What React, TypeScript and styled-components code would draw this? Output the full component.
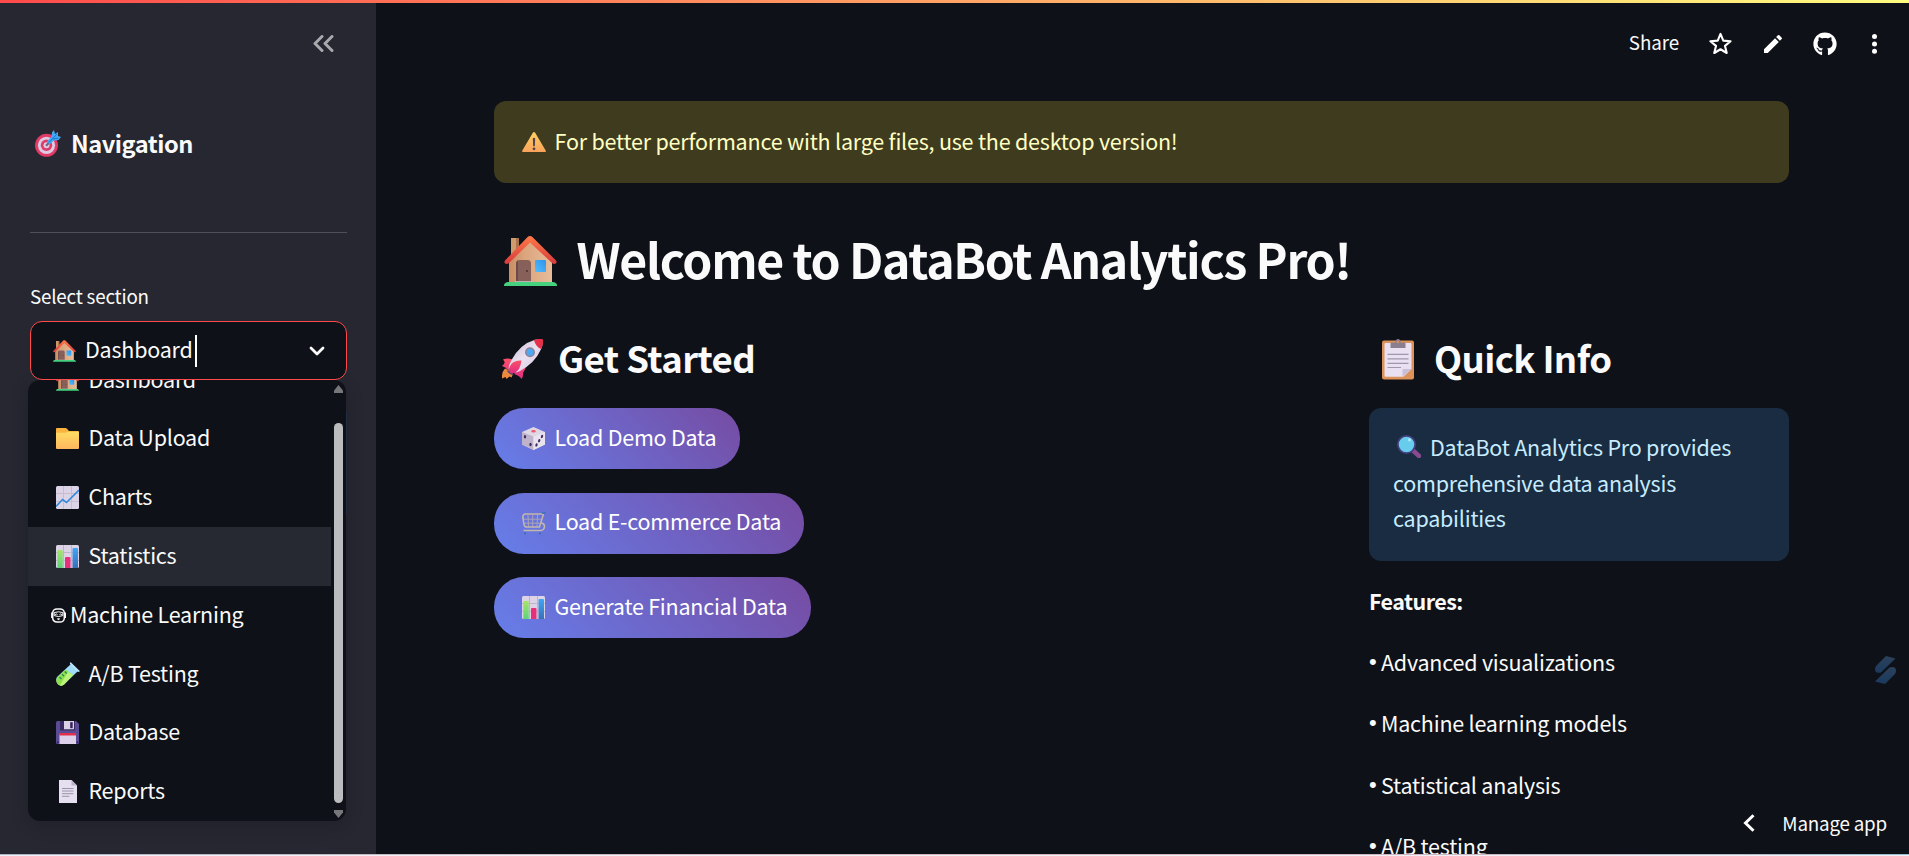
import React from 'react';
import styled, { createGlobalStyle } from 'styled-components';
import { FaGithub } from 'react-icons/fa';
import { MdEdit } from 'react-icons/md';

const GlobalStyle = createGlobalStyle`
  * { box-sizing: border-box; }
  body {
    margin: 0;
    overflow: hidden;
    background: #0e1117;
    color: #fafafa;
    font-family: "Noto Sans CJK SC", "Source Sans Pro", sans-serif;
    font-size: 21.5px;
    letter-spacing: -0.22px;
  }
  svg { display: block; flex: none; }
`;

/* ---------- emoji drawings ---------- */

type EmojiName =
  | 'house' | 'folder' | 'trend' | 'bars' | 'tube' | 'floppy' | 'page' | 'robot'
  | 'target' | 'warning' | 'rocket' | 'clipboard' | 'die' | 'cart' | 'lens';

const art: Record<EmojiName, { box: string; w: number; h: number; draw: React.ReactNode }> = {
  house: {
    box: '0 0 53 50', w: 23, h: 22,
    draw: (
      <>
        <defs>
          <linearGradient id="wall" x1="0" x2="1"><stop offset="0" stopColor="#c98d62" /><stop offset=".35" stopColor="#dba47c" /><stop offset="1" stopColor="#e6bd9b" /></linearGradient>
          <linearGradient id="roof" x1="0" y1="0" x2="0" y2="1"><stop offset="0" stopColor="#ff7a48" /><stop offset="1" stopColor="#d63a3c" /></linearGradient>
          <linearGradient id="pane" x1="1" y1="0" x2="0" y2="1"><stop offset="0" stopColor="#2b93ee" /><stop offset="1" stopColor="#55bdfb" /></linearGradient>
        </defs>
        <path d="M7 2h8v20H7z" fill="#a9744d" />
        <path d="M7 2h5v20H7z" fill="#cf9a6c" />
        <path d="M5 24 26 4l22 20v22H5z" fill="url(#wall)" />
        <path d="M26 0c1 0 1.700.4 2.400 1L52 24.500c2 2.500-1.500 4.800-4 2.500L26 6.500 5 27c-2.500 2.300-6 0-4-2.500L23.600 1C24.300.4 25 0 26 0z" fill="url(#roof)" />
        <path d="M12 46V27.500a3.500 3.500 0 0 1 3.500-3.500h8a3.500 3.500 0 0 1 3.500 3.500V46z" fill="#87605a" />
        <path d="M12 46V27.500a3.500 3.500 0 0 1 2-3.100V46z" fill="#6d4a48" />
        <circle cx="23" cy="35" r="1" fill="#4a3030" />
        <rect x="31" y="24" width="11" height="12" rx="1" fill="url(#pane)" />
        <path d="M11 45.200h17V47H11z" fill="#c8c4cc" />
        <path d="M0 50c0-3 2-4 5-4h43c3 0 5 1 5 4z" fill="#46d17f" />
      </>
    ),
  },
  folder: {
    box: '0 0 23 21', w: 23, h: 21,
    draw: (
      <>
        <defs><linearGradient id="fold" x1="0" y1="0" x2="0" y2="1"><stop offset="0" stopColor="#ffdc63" /><stop offset="1" stopColor="#ffb75f" /></linearGradient></defs>
        <path d="M0 1q0-1 1-1h8.500q.7 0 1.200.5L13 3h9q1 0 1 1v6H0z" fill="#f9b43f" />
        <path d="M0 5.500q0-.7.8-.7h8.700l2.500-1H22q1 0 1 1V20q0 1-1 1H1q-1 0-1-1z" fill="url(#fold)" />
      </>
    ),
  },
  trend: {
    box: '0 0 23 23', w: 23, h: 23,
    draw: (
      <>
        <rect width="23" height="23" rx="1.500" fill="#dcd4e6" />
        <path d="M7.500 0v23M15.500 0v23M0 7.500h23M0 15.500h23" stroke="#c6bdd1" strokeWidth="1" />
        <path d="M0 20.500 6.500 13.500 10.500 16.500 23 4" fill="none" stroke="#3089da" strokeWidth="1.600" />
      </>
    ),
  },
  bars: {
    box: '0 0 23 23', w: 23, h: 23,
    draw: (
      <>
        <defs>
          <linearGradient id="barG" x1="0" y1="0" x2="0" y2="1"><stop offset="0" stopColor="#a6e56a" /><stop offset="1" stopColor="#5ed27a" /></linearGradient>
          <linearGradient id="barB" x1="0" y1="0" x2="0" y2="1"><stop offset="0" stopColor="#3fa5f5" /><stop offset="1" stopColor="#3a70b8" /></linearGradient>
        </defs>
        <rect width="23" height="23" rx="1.500" fill="#dcd4e6" />
        <path d="M7.500 0v23M15.500 0v23M0 7.500h23M0 15.500h23" stroke="#bfb5cb" strokeWidth="1" />
        <path d="M1.300 6q0-1 1-1h3.400q1 0 1 1v17H1.300z" fill="url(#barG)" />
        <path d="M9 13q0-1 1-1h3.500q1 0 1 1v10H9z" fill="#e8307a" />
        <path d="M16.500 4q0-1 1-1h3.500q1 0 1 1v19h-5.500z" fill="url(#barB)" />
      </>
    ),
  },
  tube: {
    box: '0 0 24 24', w: 24, h: 24,
    draw: (
      <>
        <path d="M15 2 22 9 8 22.500Q5 25 2 22t-1-7z" fill="#9edcf8" />
        <path d="M9.500 7.500 17 13 8 22.500Q4.500 25 1.800 22.200T1.200 15.500z" fill="#8fe04e" />
        <path d="M12 10 17 13 8 22.500Q6 24 4 23.300z" fill="#bdf47c" />
        <path d="m3.500 15 2 2M6 12.300l2 2M8.700 9.500l2 2" stroke="#268a55" strokeWidth="1.300" />
        <path d="M14.500 0 24 9.300 22 10 13.800 1.700z" fill="#bfe5ff" />
      </>
    ),
  },
  floppy: {
    box: '0 0 23 23', w: 23, h: 23,
    draw: (
      <>
        <path d="M0 1.500Q0 0 1.500 0H20l3 3v18.500q0 1.500-1.500 1.500h-20Q0 23 0 21.500z" fill="#5b4a94" />
        <path d="M4 0h15v8.500q0 1-1 1H5q-1 0-1-1z" fill="#3a2a62" />
        <path d="M8 0h10v7.500q0 .7-.7.7H8z" fill="#dcd2e8" />
        <path d="M14.200 1.200h2.500v6h-2.500z" fill="#34205a" />
        <path d="M3.500 13h16.500v10H3.500z" fill="#ddd0ea" />
        <path d="M3.500 12h16.500v2.500H3.500z" fill="#e0304f" />
        <path d="M1 20.500h1.500v1.500H1zM20.800 20.500h1.300v1.500h-1.300z" fill="#2c1d50" />
      </>
    ),
  },
  page: {
    box: '0 0 18 23', w: 18, h: 23,
    draw: (
      <>
        <path d="M0 0h12.500L18 5.500V23H0z" fill="#e6dff0" />
        <path d="M12.500 0v5.500H18z" fill="#bdb2cc" />
        <path d="M3 8.500h11.500M3 11h11.500M3 13.700h11.500M3 16.300h7.500" stroke="#9d93aa" strokeWidth="1" />
      </>
    ),
  },
  robot: {
    box: '0 0 15 15', w: 15, h: 15,
    draw: (
      <>
        <rect x="1.700" y=".9" width="11.600" height="13.200" rx="4.200" fill="none" stroke="#fafafa" strokeWidth="1.500" />
        <path d="M.8 4.500v5.500M14.300 4.500v5.500" stroke="#fafafa" strokeWidth="1.400" />
        <path d="M3.200 4.600Q7.500 3 11.800 4.600v3Q7.500 9.500 3.200 7.600z" fill="none" stroke="#fafafa" strokeWidth="1" />
        <path d="m4.200 6.900 1.100-1.200 1.100 1.200m2.200 0 1.100-1.200 1.100 1.200" fill="none" stroke="#fafafa" strokeWidth="1" />
        <path d="M6 10.900h3M7.500 10.700v1.300" stroke="#fafafa" strokeWidth="1" />
      </>
    ),
  },
  target: {
    box: '0 0 26 27', w: 26, h: 27,
    draw: (
      <>
        <circle cx="11.500" cy="15.300" r="11.500" fill="#e03a67" />
        <circle cx="11.500" cy="15.300" r="8.600" fill="#dccbe2" />
        <circle cx="11.500" cy="15.300" r="5.700" fill="#e03a67" />
        <circle cx="11.500" cy="15.300" r="3" fill="#dccbe2" />
        <path d="m11 15.700 5-5" stroke="#6e5f80" strokeWidth="2" />
        <path d="M12 11.500 16.200 7l1-5L19 0l1 4 3-2 0 4 3 1-2.500 3-5 .800-4 3.700z" fill="#44a9f2" />
        <path d="m14 12.500 8-8.500M18 9l5.500-1" stroke="#1b74d2" strokeWidth="1" />
      </>
    ),
  },
  warning: {
    box: '0 0 24 20', w: 24, h: 20,
    draw: (
      <>
        <defs><linearGradient id="warn" x1="0" y1="0" x2="0" y2="1"><stop offset="0" stopColor="#ffd163" /><stop offset="1" stopColor="#f9a35c" /></linearGradient></defs>
        <path d="M11 .6q1-1.200 2 0L23.700 18.500q.5 1.500-1 1.500H1.300q-1.500 0-1-1.500z" fill="url(#warn)" />
        <path d="M10.800 6.300q1.200-1.300 2.400 0l-.3 7.500q-.9 1-1.800 0z" fill="#52454f" />
        <circle cx="12" cy="16.800" r="1.400" fill="#52454f" />
      </>
    ),
  },
  rocket: {
    box: '0 0 41 40', w: 41, h: 40,
    draw: (
      <>
        <defs>
          <linearGradient id="hull" x1="0" y1="0" x2="1" y2="1"><stop offset="0" stopColor="#c4b8cf" /><stop offset=".5" stopColor="#eae1f0" /><stop offset="1" stopColor="#d3c4de" /></linearGradient>
          <linearGradient id="fin" x1="0" y1="0" x2="0" y2="1"><stop offset="0" stopColor="#fb5068" /><stop offset="1" stopColor="#e02c84" /></linearGradient>
        </defs>
        <path d="M3 29.500Q-.5 33 0 39.500l3.500-1.500 1 2 3-2.500 2 1q1.500-3 1.500-5.500z" fill="#ed8a3c" />
        <path d="M1 20.500q5-2 11 .5L6 31q-2.500-3-6-4 2.500-1.500 2.700-4zM24 24q.5 5-3 10 .5 3.500-1.500 6-2-3.500-7.500-5z" fill="url(#fin)" />
        <path d="M7 32Q5.500 28 9.500 21 18 5 33 .7 37 0 40 .3q1.500 5-1 10Q33 24 18 32q-7 3.500-11 0z" fill="url(#hull)" />
        <path d="M32 1q4-1.300 8-1 1.500 0 1 4-.4 3-1.700 6-3-1-4.800-3.500T32 1z" fill="#e5304c" />
        <circle cx="28" cy="13.300" r="5" fill="#8d8196" />
        <circle cx="28" cy="13.300" r="3.500" fill="#4da8f4" />
        <path d="M6.500 31Q8 25.500 11 23.500q4-2.500 8.500-2-.5 4-2.500 8.500-3.500 5-8 4-2.500-1-2.500-3z" fill="url(#fin)" />
        <path d="M5.500 31.500q2 3.500 6 4" fill="none" stroke="#4a3d78" strokeWidth="1.300" />
      </>
    ),
  },
  clipboard: {
    box: '0 0 32 41', w: 32, h: 41,
    draw: (
      <>
        <rect y="1.500" width="32" height="39" rx="2" fill="#dc9258" />
        <path d="M2.500 5q0-1 1-1h25q1 0 1 1v25l-8 7.700H3.500q-1 0-1-1z" fill="#e9e0f1" />
        <path d="M20.500 31q0-1 1-1h8l-9 8z" fill="#cbbfd8" />
        <path d="M8.500 3.500h5Q13.500 0 16 0t2.500 3.500h4q1 0 1 1V9h-15V4.500q0-1 1-1z" fill="#8b7e90" />
        <circle cx="16" cy="3" r="1.200" fill="#dc9258" />
        <path d="M5.500 15.300h21M5.500 19.800h21M5.500 24.300h21M5.500 28.500h13.500" stroke="#a196ad" strokeWidth="1.200" />
      </>
    ),
  },
  die: {
    box: '0 0 23 23', w: 23, h: 23,
    draw: (
      <>
        <path d="M11.500 0 23 5v12.500L11.500 23 0 17.500V5z" fill="#ded8e6" strokeLinejoin="round" />
        <path d="M0 5 11.500 9.500V23L0 17.500z" fill="#beb3ca" />
        <path d="M23 5 11.500 9.500V23L23 17.500z" fill="#e9e3ee" />
        <ellipse cx="11.500" cy="4.300" rx="2.300" ry="1.300" fill="#f25867" />
        <ellipse cx="3" cy="9.800" rx="1.200" ry="1.800" fill="#3f2e60" />
        <ellipse cx="8.500" cy="17.500" rx="1.200" ry="1.800" fill="#3f2e60" />
        <ellipse cx="20" cy="9.500" rx="1.100" ry="1.800" fill="#3f2e60" transform="rotate(18 20 9.500)" />
        <ellipse cx="17.200" cy="13.700" rx="1.100" ry="1.800" fill="#3f2e60" transform="rotate(18 17.200 13.700)" />
        <ellipse cx="14.500" cy="18" rx="1.100" ry="1.800" fill="#3f2e60" transform="rotate(18 14.500 18)" />
      </>
    ),
  },
  cart: {
    box: '0 0 24 23', w: 24, h: 23,
    draw: (
      <>
        <path d="M1.500 5v7M1 7.200h18.500M2 11.200h17M6 3l.5 12M10.700 3v12M15.500 3 15 15" fill="none" stroke="#aaa3b8" strokeWidth="1" />
        <path d="M21 2H3Q.7 2.500.8 5.500L2 12.500Q2.500 15 5 15h12.500L21.500 2M19.500 11q3 .5 3 3.500T19 18.500H1.500" fill="none" stroke="#c1b7ac" strokeWidth="1.500" />
        <path d="M20 .8q1.500.7 3.500 0" stroke="#3c6fb2" strokeWidth="1.500" fill="none" />
        <path d="M3 20.500v1.700M18 20.500v1.700" stroke="#396cae" strokeWidth="2" />
      </>
    ),
  },
  lens: {
    box: '0 0 24 23', w: 24, h: 23,
    draw: (
      <>
        <path d="m16 15.500 6 5.500" stroke="#8a4b8e" strokeWidth="4.500" strokeLinecap="round" />
        <circle cx="9.500" cy="9.500" r="8.600" fill="#68cdec" stroke="#44407e" strokeWidth="1.700" />
        <circle cx="12.500" cy="5" r="1.400" fill="#b7edfa" />
      </>
    ),
  },
};

const Emoji = ({ name, w, h }: { name: EmojiName; w?: number; h?: number }) => (
  <svg width={w ?? art[name].w} height={h ?? art[name].h} viewBox={art[name].box} aria-hidden="true">
    {art[name].draw}
  </svg>
);

/* ---------- page frame ---------- */

const Page = styled.div`
  position: relative;
  display: grid;
  grid-template-columns: 376px 1fr;
  height: 856px;
  overflow: hidden;
`;

const TopStrip = styled.div`
  position: absolute;
  inset: 0 0 auto;
  height: 3px;
  background: linear-gradient(90deg, #ff4b4b, #fffd80);
  z-index: 5;
`;

const BottomEdge = styled.div`
  position: absolute;
  inset: auto 0 0;
  height: 2px;
  border-bottom: 1px solid #eef0f5;
  background: linear-gradient(90deg, #a9b4c9, #cdb9c2 25%, #d9b3b8 55%, #c9b5c2 78%, #9dbdd0);
  z-index: 5;
`;

/* ---------- sidebar ---------- */

const Sidebar = styled.aside`
  background: #262730;
  padding: 35px 29px 0 30px;
`;

const Collapse = styled.div`
  display: flex;
  justify-content: flex-end;
  padding-right: 13px;
  height: 90px;
`;

const NavTitle = styled.h2`
  display: flex;
  align-items: center;
  gap: 10px;
  height: 36px;
  margin: 0;
  padding-left: 5px;
  font-size: 23.6px;
  line-height: 36px;
  font-weight: 600;
  letter-spacing: -0.45px;
`;

const Divider = styled.hr`
  height: 1px;
  margin: 71px 0 0;
  border: 0;
  background: #4e4f57;
`;

const FieldLabel = styled.div`
  margin-top: 49px;
  font-size: 18.8px;
  line-height: 28px;
  letter-spacing: -0.2px;
`;

const SelectWrap = styled.div`
  position: relative;
  margin-top: 11px;
`;

const SelectBox = styled.div`
  position: relative;
  z-index: 2;
  display: flex;
  align-items: center;
  height: 59px;
  padding: 0 21px 0 22px;
  border: 1px solid #ff4b4b;
  border-radius: 12px;
  background: #0e1117;
`;

const Label = styled.span<{ $gap?: number; $drop?: number }>`
  margin-left: ${p => p.$gap ?? 9}px;
  padding-bottom: ${p => p.$drop ?? 3.5}px;
  line-height: 32px;
  white-space: nowrap;
`;

const Caret = styled.span`
  width: 2px;
  height: 32px;
  margin-left: 2px;
  background: #fff;
`;

const Arrow = styled.div`
  margin-left: auto;
`;

const Menu = styled.div`
  position: absolute;
  z-index: 1;
  top: 59px;
  left: -2px;
  width: 318px;
  height: 441px;
  display: flex;
  overflow: hidden;
  border-radius: 12px;
  background: #0e1117;
`;

const MenuShadow = styled.div`
  position: absolute;
  top: 59px;
  left: -2px;
  width: 318px;
  height: 441px;
  border-radius: 12px;
  box-shadow: 0 4px 16px rgba(14, 17, 23, 0.25);
`;

/* edge of the select that lies under the open menu */
const UnderEdge = styled.div`
  position: absolute;
  top: 90px;
  right: 0;
  width: 2px;
  height: 103px;
  background: #202d42;
`;

const Options = styled.div`
  width: 303px;
  margin-top: -29.5px;
`;

const Option = styled.div<{ $active?: boolean; $indent: number }>`
  display: flex;
  align-items: center;
  height: 58.8px;
  padding-left: ${p => p.$indent}px;
  background: ${p => (p.$active ? '#262931' : 'transparent')};
`;

const IconSlot = styled.span<{ $width: number }>`
  display: flex;
  justify-content: center;
  width: ${p => p.$width}px;
`;

const ScrollTrack = styled.div`
  display: flex;
  flex-direction: column;
  align-items: center;
  width: 15px;
  padding: 5px 0 3px;
`;

const ScrollThumb = styled.div`
  width: 9px;
  height: 380px;
  margin: 30px 0 7px;
  border-radius: 5px;
  background: #bbbcbd;
`;

const options: { icon: EmojiName; text: string; active?: boolean }[] = [
  { icon: 'house', text: 'Dashboard' },
  { icon: 'folder', text: 'Data Upload' },
  { icon: 'trend', text: 'Charts' },
  { icon: 'bars', text: 'Statistics', active: true },
  { icon: 'robot', text: 'Machine Learning' },
  { icon: 'tube', text: 'A/B Testing' },
  { icon: 'floppy', text: 'Database' },
  { icon: 'page', text: 'Reports' },
];

/* ---------- main ---------- */

const Main = styled.main`
  display: flex;
  flex-direction: column;
  padding: 0 120px 0 118px;
  min-width: 0;
  height: 856px;
  overflow: hidden;
`;

const Toolbar = styled.header`
  flex: none;
  display: flex;
  align-items: flex-start;
  justify-content: flex-end;
  height: 101px;
  padding-top: 32px;
  margin-right: -88px;
`;

const Share = styled.span`
  margin: -3.8px 30px 0 0;
  font-size: 18.8px;
  line-height: 28px;
  letter-spacing: -0.1px;
`;

const ToolIcon = styled.span<{ $left: number; $top?: number }>`
  margin: ${p => p.$top ?? 0}px 0 0 ${p => p.$left}px;
`;

const Warning = styled.div`
  flex: none;
  display: flex;
  align-items: center;
  height: 82px;
  padding: 0 28px;
  border-radius: 12px;
  background: #3e3b1f;
  color: #ffffc2;
  letter-spacing: -0.21px;
`;

const Title = styled.h1`
  flex: none;
  display: flex;
  align-items: center;
  gap: 19.5px;
  height: 66px;
  margin: 42px 0 0;
  padding-left: 10px;
  font-size: 48.2px;
  line-height: 66px;
  font-weight: 600;
  letter-spacing: -1.34px;
  white-space: nowrap;

  svg { margin-top: 5px; }
`;

const Columns = styled.div`
  display: grid;
  grid-template-columns: 1fr 420px;
  margin-top: 42px;
`;

const Heading = styled.h2<{ $left: number; $gap: number }>`
  display: flex;
  align-items: center;
  gap: ${p => p.$gap}px;
  height: 50px;
  margin: 0 0 25px;
  padding-left: ${p => p.$left}px;
  font-size: 36.5px;
  line-height: 50px;
  font-weight: 600;
  letter-spacing: -0.6px;
  white-space: nowrap;

  svg { margin-top: 2px; }
`;

const Buttons = styled.div`
  display: flex;
  flex-direction: column;
  align-items: flex-start;
  gap: 23.6px;
`;

const ActionButton = styled.button<{ $width: number }>`
  display: flex;
  align-items: center;
  width: ${p => p.$width}px;
  height: 61px;
  padding: 0 0 0 28px;
  border: 0;
  border-radius: 30px;
  background: linear-gradient(45deg, #667eea, #764ba2);
  color: #fff;
  font: inherit;
  letter-spacing: -0.23px;
`;

const Info = styled.div`
  height: 153px;
  padding: 20.8px 24px 0;
  border-radius: 12px;
  background: #192c41;
  color: #c7ebff;
  line-height: 35.7px;
  white-space: nowrap;
`;

const InfoLine = styled.div`
  display: flex;
  align-items: center;
  gap: 9px;
  padding-left: 4px;
`;

const Features = styled.div`
  display: flex;
  flex-direction: column;
  gap: 25.3px;
  margin-top: 21.8px;
  line-height: 36px;
`;

const FeatureTitle = styled.strong`
  font-weight: 600;
  letter-spacing: -0.55px;
`;

const Feature = styled.div`
  display: flex;
`;

const Bullet = styled.span`
  width: 12px;
  font-family: "Liberation Sans", sans-serif;
  font-size: 22px;
`;

const Manage = styled.div`
  position: absolute;
  right: 22px;
  bottom: 19px;
  display: flex;
  align-items: center;
  gap: 27px;
  font-size: 18.8px;
  line-height: 28px;
  letter-spacing: -0.2px;
`;

const SideBadge = styled.div`
  position: absolute;
  left: 1875px;
  top: 656px;
`;

export default function App() {
  return (
    <Page>
      <GlobalStyle />
      <TopStrip />
      <Sidebar>
        <Collapse>
          <svg width="21" height="17" viewBox="0 0 21 17" fill="none" stroke="#a8a9ad" strokeWidth="3" strokeLinecap="round" strokeLinejoin="round">
            <path d="M9 1.500 2 8.500l7 7M19 1.500l-7 7 7 7" />
          </svg>
        </Collapse>
        <NavTitle><Emoji name="target" /><span>Navigation</span></NavTitle>
        <Divider />
        <FieldLabel>Select section</FieldLabel>
        <SelectWrap>
          <MenuShadow />
          <UnderEdge />
          <SelectBox>
            <Emoji name="house" />
            <Label>Dashboard</Label>
            <Caret />
            <Arrow>
              <svg width="16" height="10" viewBox="0 0 16 10" fill="none" stroke="#fafafa" strokeWidth="2.800" strokeLinecap="round" strokeLinejoin="round">
                <path d="m2 2 6 6 6-6" />
              </svg>
            </Arrow>
          </SelectBox>
          <Menu>
            <Options>
              {options.map(o => {
                const small = o.icon === 'robot';
                return (
                  <Option key={o.text} $active={o.active} $indent={small ? 23 : 28}>
                    <IconSlot $width={small ? 15 : 23}><Emoji name={o.icon} /></IconSlot>
                    <Label $gap={small ? 4 : 9.4} $drop={2.6}>{o.text}</Label>
                  </Option>
                );
              })}
            </Options>
            <ScrollTrack>
              <svg width="9" height="8" viewBox="0 0 9 8"><path d="M4.500 0 9 5.500V8H0V5.500z" fill="#76777a" /></svg>
              <ScrollThumb />
              <svg width="9" height="8" viewBox="0 0 9 8"><path d="M4.500 8 9 2.500V0H0v2.500z" fill="#76777a" /></svg>
            </ScrollTrack>
          </Menu>
        </SelectWrap>
      </Sidebar>

      <Main>
        <Toolbar>
          <Share>Share</Share>
          <ToolIcon $left={0}>
            <svg width="23" height="23" viewBox="0 0 24 24" fill="none" stroke="#fff" strokeWidth="2.200" strokeLinejoin="round">
              <path d="m12 2 2.900 7 7.600.6-5.800 4.900 1.800 7.400L12 18l-6.500 3.900 1.800-7.400L1.500 9.600 9.100 9z" />
            </svg>
          </ToolIcon>
          <ToolIcon $left={29} $top={-0.5}><MdEdit size={24} color="#fff" /></ToolIcon>
          <ToolIcon $left={28} $top={-0.5}><FaGithub size={24} color="#fff" /></ToolIcon>
          <ToolIcon $left={35} $top={1.5}>
            <svg width="5" height="20" viewBox="0 0 5 20" fill="#fff">
              <circle cx="2.500" cy="2.500" r="2.500" /><circle cx="2.500" cy="9.900" r="2.500" /><circle cx="2.500" cy="17.300" r="2.500" />
            </svg>
          </ToolIcon>
        </Toolbar>

        <Warning>
          <Emoji name="warning" />
          <Label $gap={8.6} $drop={1.5}>For better performance with large files, use the desktop version!</Label>
        </Warning>

        <Title><Emoji name="house" w={53} h={50} /><span>Welcome to DataBot Analytics Pro!</span></Title>

        <Columns>
          <section>
            <Heading $left={8} $gap={15}><Emoji name="rocket" /><span>Get Started</span></Heading>
            <Buttons>
              <ActionButton $width={246}><Emoji name="die" /><Label $gap={9.500}>Load Demo Data</Label></ActionButton>
              <ActionButton $width={310}><Emoji name="cart" /><Label $gap={8.500}>Load E-commerce Data</Label></ActionButton>
              <ActionButton $width={317}><Emoji name="bars" /><Label $gap={9.500}>Generate Financial Data</Label></ActionButton>
            </Buttons>
          </section>
          <section>
            <Heading $left={13} $gap={20}><Emoji name="clipboard" /><span>Quick Info</span></Heading>
            <Info>
              <InfoLine><Emoji name="lens" /><span>DataBot Analytics Pro provides</span></InfoLine>
              <div>comprehensive data analysis</div>
              <div>capabilities</div>
            </Info>
            <Features>
              <FeatureTitle>Features:</FeatureTitle>
              <Feature><Bullet>•</Bullet>Advanced visualizations</Feature>
              <Feature><Bullet>•</Bullet>Machine learning models</Feature>
              <Feature><Bullet>•</Bullet>Statistical analysis</Feature>
              <Feature><Bullet>•</Bullet>A/B testing</Feature>
            </Features>
          </section>
        </Columns>
      </Main>

      <SideBadge>
        <svg width="21" height="28" viewBox="0 0 21 28">
          <defs><linearGradient id="badge" x1="0" y1="0" x2="0" y2="1"><stop offset="0" stopColor="#2c415a" /><stop offset="1" stopColor="#1a3a5f" /></linearGradient></defs>
          <path d="M11 0 20.500 2.500 6 16.500Q0 18 0 13q0-2 1.500-3.500z" fill="url(#badge)" />
          <path d="M10 28 0 25.500 14.500 11.500Q21 9.500 21 15q0 2-1.500 3.500z" fill="url(#badge)" />
        </svg>
      </SideBadge>
      <Manage>
        <svg width="12" height="18" viewBox="0 0 12 18" fill="none" stroke="#fff" strokeWidth="3">
          <path d="M10.500 1.200 2.500 9l8 7.800" />
        </svg>
        <span>Manage app</span>
      </Manage>
      <BottomEdge />
    </Page>
  );
}
